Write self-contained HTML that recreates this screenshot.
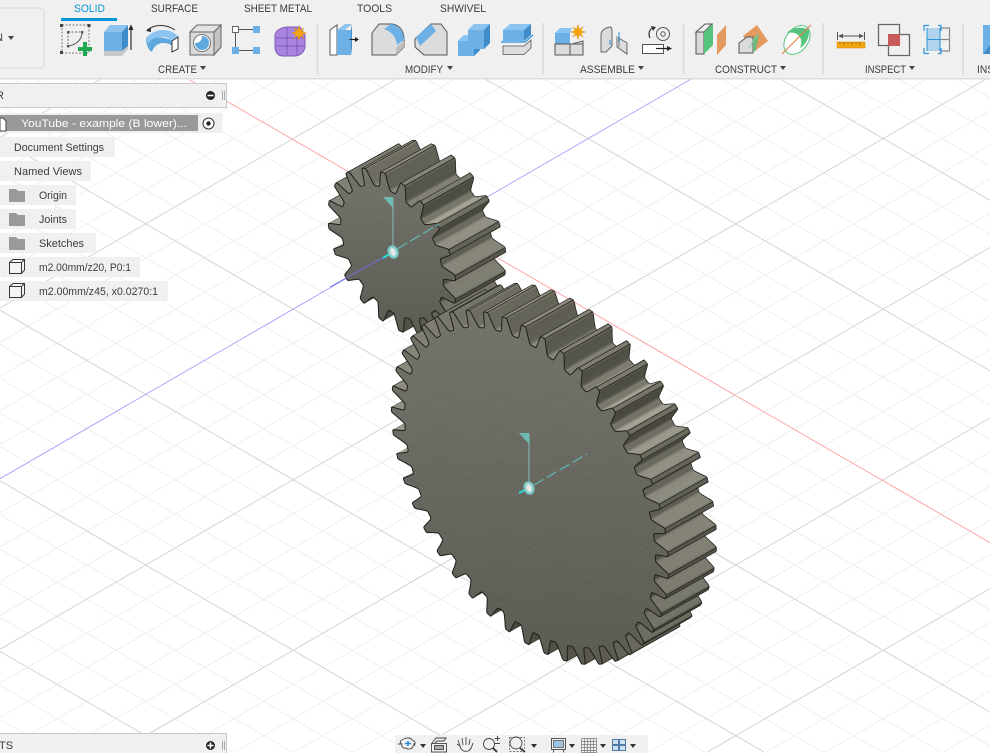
<!DOCTYPE html>
<html><head><meta charset="utf-8"><style>
html,body{margin:0;padding:0;background:#fff;width:990px;height:753px;overflow:hidden}
svg{display:block;overflow:hidden}
text{font-family:"Liberation Sans",sans-serif;font-size:11px;fill:#3c3c3c}
</style></head><body>
<svg id="s" xmlns="http://www.w3.org/2000/svg" width="990" height="753" viewBox="0 0 990 753">
<defs>
<linearGradient id="fg" x1="0" y1="0" x2="0" y2="1"><stop offset="0" stop-color="#74746d"/><stop offset="1" stop-color="#5c5c54"/></linearGradient>
<polygon id="star" fill="#f5a30f" stroke="#d98a00" stroke-width=".3" points="0,-8 1.5,-3 5.6,-5.6 3,-1.5 8,0 3,1.5 5.6,5.6 1.5,3 0,8 -1.5,3 -5.6,5.6 -3,1.5 -8,0 -3,-1.5 -5.6,-5.6 -1.5,-3"/>
</defs>
<rect width="990" height="753" fill="#fff"/>
<g id="grid"></g>
<g id="gears"></g>

<!-- origin markers -->
<g>
<path d="M330 287L384 257" stroke="#6f6fe0" stroke-width="1" fill="none"/>
<path d="M393 198V250" stroke="#86bdb9" stroke-width="1" fill="none"/>
<polygon points="383,197 393,197 393,208" fill="#6fb9b5"/>
<path d="M397 249L439 224" stroke="#5fb5b0" stroke-width="1.3" stroke-dasharray="12 3" fill="none"/>
<path d="M383 258L391 253" stroke="#1fe0da" stroke-width="2" fill="none"/>
<ellipse cx="393" cy="252" rx="5" ry="6.5" transform="rotate(-20 393 252)" fill="#8fd0cc" stroke="#6fb9b5"/>
<ellipse cx="393" cy="252" rx="2.5" ry="4" transform="rotate(-20 393 252)" fill="#e8e8e8"/>
<path d="M529 434V482" stroke="#86bdb9" stroke-width="1" fill="none"/>
<polygon points="519,433 529,433 529,444" fill="#6fb9b5"/>
<path d="M534 485L587 454" stroke="#5fb5b0" stroke-width="1.3" stroke-dasharray="11 4" fill="none"/>
<path d="M519 493L527 489" stroke="#1fe0da" stroke-width="2" fill="none"/>
<ellipse cx="529" cy="488" rx="5" ry="6.5" transform="rotate(-20 529 488)" fill="#8fd0cc" stroke="#6fb9b5"/>
<ellipse cx="529" cy="488" rx="2.5" ry="4" transform="rotate(-20 529 488)" fill="#e8e8e8"/>
</g>

<!-- toolbar -->
<rect x="0" y="0" width="990" height="78" fill="#f0f0f0"/>
<rect x="0" y="78" width="990" height="1.5" fill="#dcdcdc"/>
<path d="M0 8H40A4 4 0 0 1 44 12V64A4 4 0 0 1 40 68H0" fill="#f0f0f0" stroke="#dcdcdc" stroke-width="1.2"/>
<text x="-5" y="41">N</text>
<polygon points="8,36 14,36 11,40" fill="#444"/>

<text x="74" y="12" textLength="31" lengthAdjust="spacingAndGlyphs" style="fill:#0696d7">SOLID</text>
<rect x="61" y="18" width="56" height="3" fill="#0696d7"/>
<text x="151" y="12" textLength="47" lengthAdjust="spacingAndGlyphs">SURFACE</text>
<text x="244" y="12" textLength="68" lengthAdjust="spacingAndGlyphs">SHEET METAL</text>
<text x="357" y="12" textLength="35" lengthAdjust="spacingAndGlyphs">TOOLS</text>
<text x="440" y="12" textLength="46" lengthAdjust="spacingAndGlyphs">SHWIVEL</text>

<text x="158" y="73" textLength="39" lengthAdjust="spacingAndGlyphs">CREATE</text><polygon points="200,66 206,66 203,70" fill="#444"/>
<text x="405" y="73" textLength="38" lengthAdjust="spacingAndGlyphs">MODIFY</text><polygon points="447,66 453,66 450,70" fill="#444"/>
<text x="580" y="73" textLength="55" lengthAdjust="spacingAndGlyphs">ASSEMBLE</text><polygon points="638,66 644,66 641,70" fill="#444"/>
<text x="715" y="73" textLength="62" lengthAdjust="spacingAndGlyphs">CONSTRUCT</text><polygon points="780,66 786,66 783,70" fill="#444"/>
<text x="865" y="73" textLength="41" lengthAdjust="spacingAndGlyphs">INSPECT</text><polygon points="909,66 915,66 912,70" fill="#444"/>
<text x="977" y="73" textLength="17" lengthAdjust="spacingAndGlyphs">INS</text>

<g fill="#dedede"><rect x="316.5" y="23" width="2" height="51"/><rect x="542" y="23" width="2" height="51"/><rect x="682.5" y="23" width="2" height="51"/><rect x="822" y="23" width="2" height="51"/><rect x="962" y="23" width="2" height="51"/></g>

<!-- CREATE icons -->
<g fill="none">
<path d="M62 25H89V53H62Z" stroke="#777" stroke-dasharray="2 1.5"/>
<g fill="#444"><rect x="60" y="24" width="3" height="3"/><rect x="87.5" y="24" width="3" height="3"/><rect x="60" y="51" width="3" height="3"/></g>
<path d="M68 32V46M68 32H82" stroke="#666" stroke-dasharray="2 1.5"/>
<path d="M68 46C76 45 82 40 82 32" stroke="#555"/>
<g fill="#555"><rect x="67" y="31" width="2.4" height="2.4"/><rect x="81" y="31" width="2.4" height="2.4"/><rect x="67" y="45" width="2.4" height="2.4"/></g>
<path d="M85 42V56M78 49H92" stroke="#1fa84f" stroke-width="4"/>
<polygon points="104,32 122,32 122,51 104,51" fill="#6db0e6"/>
<polygon points="104,32 110,25 128,25 122,32" fill="#8cc4ef"/>
<polygon points="122,32 128,25 128,46 122,51" fill="#3f8cc8"/>
<polygon points="104,51 122,51 128,46 128,49 122,56 104,56" fill="#c8c8c8"/>
<path d="M131 50V27" stroke="#333" stroke-width="1.2"/><polygon points="128.5,30 131,24.5 133.5,30" fill="#222"/>
<path d="M147 30C155 24 166 24 175 30" stroke="#333"/><polygon points="146,31 151,27 151,32" fill="#333"/>
<path d="M146 38C146 44 148 50 152 52C153 47 158 43 163 43C167 43 170 44 172 46V41C168 37 150 36 146 38Z" fill="#5ea8de"/>
<path d="M146 38C150 33 157 30 163 30C169 30 174 32 178 36L172 41C168 37 165 37 161 37C155 37 151 39 148 44Z" fill="#8cc4ef"/>
<polygon points="172,41 178,37 178,49 172,52" fill="#fff" stroke="#333"/>
<polygon points="190,32 197,25 221,25 214,32" fill="#e4e4e4" stroke="#666"/>
<polygon points="214,32 221,25 221,47 214,55" fill="#c4c4c4" stroke="#666"/>
<rect x="190" y="32" width="24" height="23" fill="#d8d8d8" stroke="#666"/>
<circle cx="202" cy="43" r="8.5" fill="#fff" stroke="#777"/>
<path d="M202 36A7 7 0 1 1 195 43C200 43 202 40 202 36Z" fill="#5ea8de"/>
<rect x="232.5" y="26.5" width="6" height="6" fill="#fff" stroke="#666"/>
<rect x="253" y="26" width="7" height="7" fill="#6db0e6"/>
<rect x="232" y="47" width="7" height="7" fill="#6db0e6"/>
<rect x="253" y="47" width="7" height="7" fill="#6db0e6"/>
<path d="M239 29.5H253M235.500 33V47M239 50.500H253" stroke="#555"/>
<path d="M275 36C275 30 282 27 289 27H300L305 35V46C305 52 300 56 294 56H283C278 56 275 52 275 47Z" fill="#a884e0" stroke="#7c5aba"/>
<path d="M276 38H304M276 46H304M287 28V55M297 28V55" stroke="#7c5aba" stroke-width=".9"/>
<use href="#star" transform="translate(299,33) scale(.95)"/>
</g>

<!-- MODIFY icons -->
<g fill="none">
<polygon points="330,30 337,25 337,55 330,55" fill="#fff" stroke="#555"/>
<polygon points="337,30 345,24 352,24 345,30" fill="#8cc4ef"/>
<rect x="337" y="30" width="14" height="25" fill="#6db0e6"/>
<polygon points="351,30 352,24 352,48 351,55" fill="#3f8cc8"/>
<path d="M349.500 39.500H358" stroke="#222" stroke-width="1.2"/><polygon points="355,37 359,39.500 355,42" fill="#222"/>
<path d="M372 55V33L379 24H392C400 25 404 31 404 40V47L396 55Z" fill="#dcdcdc" stroke="#555"/>
<path d="M384 29L391 24C398 25 404 32 404 40L397 45C396 37 392 32 384 29Z" fill="#6db0e6"/>
<polygon points="396,55 396,48 404,41 404,47" fill="#bcbcbc"/>
<polygon points="415,39 431,24 441,24 447,32 447,55 424,55 415,47" fill="#dcdcdc" stroke="#555"/>
<polygon points="416,37 431,24 436,31 420,46" fill="#6db0e6"/>
<path d="M458 41L464 35H468V30L474 24H490V43L484 49H480V50L474 56H458Z" fill="#6db0e6"/>
<polygon points="468,30 474,24 490,24 484,30" fill="#8cc4ef"/>
<polygon points="484,30 490,24 490,43 484,49" fill="#3f8cc8"/>
<polygon points="458,41 464,35 468,35 468,41" fill="#8cc4ef"/>
<polygon points="474,49 480,49 480,50 474,56" fill="#3f8cc8"/>
<polygon points="503,30 510,24 531,24 524,30" fill="#8cc4ef"/>
<rect x="503" y="30" width="21" height="11" fill="#6db0e6"/>
<polygon points="524,30 531,24 531,35 524,41" fill="#3f8cc8"/>
<path d="M501 42H525L533 35" stroke="#1f8fd8" stroke-width="1.3"/>
<polygon points="503,46 524,46 531,40 531,48 524,54.500 503,54.500" fill="#dcdcdc" stroke="#555" stroke-width=".8"/>
</g>

<!-- ASSEMBLE icons -->
<g fill="none">
<rect x="555" y="33" width="15" height="11" fill="#6db0e6"/>
<polygon points="555,33 560,28 572,28 570,33" fill="#8cc4ef"/>
<polygon points="555,44 570,44 570,55 555,55" fill="#dcdcdc" stroke="#555"/>
<polygon points="570,44 583,44 583,55 570,55" fill="#dcdcdc" stroke="#555"/>
<path d="M572 44L583 41V44" stroke="#555"/>
<use href="#star" transform="translate(578,32) scale(.95)"/>
<path d="M601 52V35C601 30 605 28 610 27C612 27 612 30 612 33V46L606 52Z" fill="#dcdcdc" stroke="#666"/>
<path d="M617 37L627 43V54L617 47Z" fill="#dcdcdc" stroke="#666"/>
<rect x="616" y="37" width="4" height="10" fill="#aaa"/>
<path d="M619 32V42M610 40V45" stroke="#1f8fd8"/>
<circle cx="663" cy="34" r="6.500" stroke="#555"/><circle cx="663" cy="34" r="2.200" stroke="#555"/>
<path d="M654 27C649 29 648 34 650 38" stroke="#333" stroke-width="1.200"/><polygon points="651,26 656,27 653,31" fill="#333"/>
<rect x="642.500" y="44.500" width="21" height="9" fill="#fff" stroke="#555"/>
<path d="M656 48.500H670" stroke="#222" stroke-width="1.200"/><polygon points="667,46 672,48.500 667,51" fill="#222"/>
</g>

<!-- CONSTRUCT icons -->
<g fill="none">
<polygon points="696,32 705,24 712,24 704,32" fill="#eee" stroke="#555"/>
<rect x="696" y="32" width="8" height="22" fill="#d8d8d8" stroke="#555"/>
<polygon points="704,32 713,24 713,45 704,54" fill="#56c47e"/>
<polygon points="717,35 726,25 726,45 717,55" fill="#e4995f"/>
<polygon points="743,36 757,25 768,41 755,51" fill="#e4995f"/>
<polygon points="739,43 747,37 753,37 753,53 739,53" fill="#dcdcdc" stroke="#555"/>
<polygon points="753,38 759,34 756,50 753,53" fill="#6fb87a"/>
<path d="M749 48L758 34" stroke="#1fa84f"/>
<path d="M749 48L758 34" stroke="#fff" stroke-width=".5"/>
<ellipse cx="797" cy="40" rx="11" ry="16" transform="rotate(38 797 40)" fill="#fff" stroke="#56c47e"/>
<path d="M787 33C792 26 805 27 809 30C810 36 806 45 800 48C804 38 798 31 787 33Z" fill="#56c47e"/>
<path d="M782 54L811 25" stroke="#e07a3a" stroke-width="1"/>
</g>

<!-- INSPECT icons -->
<g fill="none">
<rect x="837" y="42" width="28" height="6" fill="#f5a60f" stroke="#c88a00" stroke-width=".5"/>
<path d="M840 42v2M844 42v3M848 42v2M852 42v3M856 42v2M860 42v3" stroke="#7a5800" stroke-width=".7"/>
<path d="M837.500 32V40M864.500 32V40M839 36H863" stroke="#555"/>
<polygon points="838,36 843,33.800 843,38.200" fill="#555"/><polygon points="864,36 859,33.800 859,38.200" fill="#555"/>
<path d="M899.500 34.500V24.500H878.500V45.500H888.500" stroke="#666" stroke-width="1.300"/>
<path d="M888.500 45.500V55.500H909.500V34.500H899.500" stroke="#666" stroke-width="1.300"/>
<rect x="888" y="34" width="12" height="12" fill="#c95a5a"/>
<rect x="927" y="28" width="13" height="11" fill="#b0d3ee"/><rect x="927" y="40" width="13" height="11" fill="#b0d3ee"/>
<path d="M940 28H949.500V51H940M940 39.500H949.500" stroke="#888" stroke-width="1.200"/>
<path d="M927 28V51M927 39.500H940M940 28V51" stroke="#2a95dc" stroke-width="1"/>
<path d="M929 25.500H924V31M929 53.500H924V48M938 25.500H941V31M938 53.500H941V48" stroke="#2a95dc" stroke-width="1.200"/>
<polygon points="983,25 990,25 990,54 983,54" fill="#3f8cc8"/>
<polygon points="983,25 990,25 990,45 983,54" fill="#6db0e6"/>
</g>

<!-- browser -->
<path d="M0 83.500H226.500V107.500H0Z" fill="#f0f0f0"/>
<path d="M0 83.500H226.500V107.500H0" fill="none" stroke="#c8c8c8"/>
<text x="-4" y="99">R</text>
<circle cx="210.500" cy="95.500" r="4.500" fill="#222"/><rect x="207.500" y="94.700" width="6" height="1.600" fill="#fff"/>
<path d="M222.500 91V100M224.500 91V100" stroke="#999" stroke-width=".8"/>

<rect x="0" y="113" width="222.500" height="20" fill="#efefef"/>
<rect x="0" y="115" width="198" height="16" fill="#999"/>
<path d="M0 118H3L6 121V131H0Z" fill="#fff" stroke="#444"/>
<text x="21" y="127" textLength="166" lengthAdjust="spacingAndGlyphs" style="fill:#fff">YouTube - example (B lower)...</text>
<circle cx="208.500" cy="123.500" r="5.500" fill="#fff" stroke="#333"/><circle cx="208.500" cy="123.500" r="2.200" fill="#222"/>

<g fill="#f0f0f0">
<rect x="0" y="137" width="115" height="20"/><rect x="0" y="161" width="91" height="20"/><rect x="0" y="185" width="76" height="20"/><rect x="0" y="209" width="76" height="20"/><rect x="0" y="233" width="96" height="20"/><rect x="0" y="257" width="140" height="20"/><rect x="0" y="281" width="168" height="20"/>
</g>
<text x="14" y="151" textLength="90" lengthAdjust="spacingAndGlyphs">Document Settings</text>
<text x="14" y="175" textLength="68" lengthAdjust="spacingAndGlyphs">Named Views</text>
<text x="39" y="199" textLength="28" lengthAdjust="spacingAndGlyphs">Origin</text>
<text x="39" y="223" textLength="28" lengthAdjust="spacingAndGlyphs">Joints</text>
<text x="39" y="247" textLength="45" lengthAdjust="spacingAndGlyphs">Sketches</text>
<text x="39" y="271" textLength="92" lengthAdjust="spacingAndGlyphs">m2.00mm/z20, P0:1</text>
<text x="39" y="295" textLength="119" lengthAdjust="spacingAndGlyphs">m2.00mm/z45, x0.0270:1</text>
<g fill="#9a9a9a">
<path d="M9 189H16L18 191H25V202H9Z"/><path d="M9 213H16L18 215H25V226H9Z"/><path d="M9 237H16L18 239H25V250H9Z"/>
</g>
<g fill="#f4f4f4" stroke="#333" stroke-width="1">
<path d="M9.500 262.500L13 259.500H24.500V270L21.500 273.500H9.500Z"/><path d="M9.500 262.500H21.500V273.500M21.500 262.500L24.500 259.500" fill="none"/>
<path d="M9.500 286.500L13 283.500H24.500V294L21.500 297.500H9.500Z"/><path d="M9.500 286.500H21.500V297.500M21.500 286.500L24.500 283.500" fill="none"/>
</g>

<!-- comments -->
<path d="M0 733.500H226.500V753H0Z" fill="#f0f0f0"/>
<path d="M0 733.500H226.500V753" fill="none" stroke="#c8c8c8"/>
<text x="-1" y="749">TS</text>
<circle cx="210.500" cy="745.500" r="4.500" fill="#222"/><path d="M207.500 745.500H213.500M210.500 742.500V748.500" stroke="#fff" stroke-width="1.500"/>
<path d="M222.500 741V750M224.500 741V750" stroke="#999" stroke-width=".8"/>

<!-- nav bar -->
<rect x="395" y="735" width="253" height="18" fill="#f0f0f0"/>
<g fill="none" stroke="#444" stroke-width=".9">
<path d="M404 739C407 737 411 738 412 740C416 741 416 745 413 746C413 749 408 750 406 748C403 749 401 746 402 744C399 743 400 740 404 739Z"/>
<path d="M405 743.500H411M408 741V746" stroke="#1f8fd8" stroke-width="1.500"/>
<path d="M398 744H401M413 744H415"/>
<rect x="431.500" y="743.500" width="15" height="8.500"/><rect x="434.500" y="745.500" width="9" height="4" fill="#aaa"/>
<path d="M432 743L436 738H446L444 741H437L435 743"/>
<path d="M460 746L458 740M463 745L462 738M466 745L466 737M469 745L470 739M460 746C461 751 465 752 468 751C471 750 472 746 473 743M460 746L457 744"/>
<circle cx="489" cy="744" r="5.500"/><path d="M493 748L497 752" stroke-width="2"/>
<path d="M495 738.500H500M497.500 736V741M495 743.500H500"/>
<rect x="509.500" y="737.500" width="15" height="14" stroke-dasharray="2 1.500" stroke="#777"/>
<circle cx="516" cy="743" r="6"/><path d="M520 748L525 752" stroke-width="2"/>
<rect x="551.500" y="738.500" width="14" height="11" /><rect x="553.500" y="740.500" width="10" height="7" fill="#9fc3e4" stroke="#666"/>
<path d="M554 750L553 752.500M563 750L564 752.500"/>
<path d="M581.500 738.500H596.500V752.500H581.500ZM584.500 738.500V752.500M587.500 738.500V752.500M590.500 738.500V752.500M593.500 738.500V752.500M581.500 741.500H596.500M581.500 744.500H596.500M581.500 747.500H596.500M581.500 750.500H596.500" stroke="#777" stroke-width=".7"/>
<rect x="612.500" y="739.500" width="6" height="5" fill="#cfe0f0" stroke="#3d6fa0"/><rect x="619.500" y="739.500" width="6" height="5" fill="#cfe0f0" stroke="#3d6fa0"/><rect x="612.500" y="745.500" width="6" height="5" fill="#cfe0f0" stroke="#3d6fa0"/><rect x="619.500" y="745.500" width="6" height="5" fill="#cfe0f0" stroke="#3d6fa0"/>
</g>
<g fill="#333"><polygon points="420,744 426,744 423,748"/><polygon points="531,744 537,744 534,748"/><polygon points="569,744 575,744 572,748"/><polygon points="600,744 606,744 603,748"/><polygon points="630,744 636,744 633,748"/></g>
</svg>
<script>
(function(){
var NS="http://www.w3.org/2000/svg",g=document.getElementById("grid"),G=document.getElementById("gears");
var S=0.5783;
function el(p,t,a){var e=document.createElementNS(NS,t);for(var k in a)e.setAttribute(k,a[k]);p.appendChild(e);return e;}
function seg(p,c,s,col,op,w){
 var a=(79-c)/s,b=(752-c)/s,lo=Math.max(0,Math.min(a,b)),hi=Math.min(990,Math.max(a,b));
 if(hi<=lo)return;
 el(p,"line",{x1:lo.toFixed(1),y1:(c+s*lo).toFixed(1),x2:hi.toFixed(1),y2:(c+s*hi).toFixed(1),stroke:col,"stroke-width":w,"stroke-opacity":op});
}
function lines(p,maj,mins,op,skip){
 for(var pass=0;pass<2;pass++){
 for(var k=-60;k<=60;k++){
  var isMaj=((k%5)+5)%5==0; if((pass==1)!=isMaj)continue;
  if(skip&&k==0)continue;
  var c1=-31+34.12*k,c2=478.7+34.12*k;
  var col=isMaj?maj:mins;
  seg(p,c1,S,col,op,.9);
  seg(p,c2,-S,col,op,.9);
 }}
}
lines(g,"#d0d0d0","#eeeeee",1,true);
el(g,"line",{x1:190,y1:80,x2:990,y2:542.6,stroke:"#ff9c9c","stroke-width":.9});
el(g,"line",{x1:0,y1:478.7,x2:692,y2:78.5,stroke:"#a3a3ff","stroke-width":.9});

var defs=document.querySelector("defs"),cid=0;
function gear(cx,cy,R1,R2,z,rootF,dx,dy,ph){
 var prof=[[0,0],[.08,0],[.14,.08],[.23,.45],[.32,.92],[.36,1],[.54,1],[.58,.92],[.67,.45],[.76,.08],[.82,0],[.90,0]];
 var pts=[],p=2*Math.PI/z;
 for(var i=0;i<z;i++){
  for(var j=0;j<prof.length;j++){
   var th=(i+prof[j][0])*p+ph,r=rootF+(1-rootF)*prof[j][1];
   pts.push({x:r*Math.sin(th),y:r*Math.cos(th),e:(j==5||j==6)?1:0});
  }
 }
 function sc(P,d){return [(cx+P.x*R2*.866+d*dx).toFixed(1), (cy+P.x*R2*.5-P.y*R1+d*dy).toFixed(1)];}
 var quads=[];
 for(i=0;i<pts.length;i++){
  var a=pts[i],b=pts[(i+1)%pts.length];
  var tx=b.x-a.x,ty=b.y-a.y,l=Math.hypot(tx,ty)||1,nx=-ty/l,ny=tx/l;
  if(nx+ny<=0.0)continue;
  quads.push({a:a,b:b,nx:nx,ny:ny,k:(a.x+b.x+a.y+b.y)});
 }
 quads.sort(function(u,v){return u.k-v.k;});
 var o="";
 quads.forEach(function(q){
  var A=sc(q.a,0),B=sc(q.b,0),C=sc(q.b,1),D=sc(q.a,1);
  var t=Math.pow(Math.max(0,Math.min(1,.5+.5*(q.ny*.85-q.nx*.3))),1.3);
  var sp=Math.pow(Math.max(0,q.ny*.55-q.nx*.83),6)*.5; t=Math.min(1,t*.8+sp);
  var R=Math.round(64+t*100),Gg=Math.round(63+t*99),Bb=Math.round(54+t*95);
  var f="rgb("+R+","+Gg+","+Bb+")";
  o+='<path d="M'+A+'L'+B+'L'+C+'L'+D+'Z" fill="'+f+'" stroke="'+f+'" stroke-width=".4"/>';
  o+='<path d="M'+D+'L'+C+'" stroke="#24241f" stroke-width=".8" fill="none"/>';
  if(q.a.e==1) o+='<path d="M'+A+'L'+D+'" stroke="#24241f" stroke-width=".7" fill="none"/>';
  if(q.b.e==1) o+='<path d="M'+B+'L'+C+'" stroke="#24241f" stroke-width=".7" fill="none"/>';
 });
 var face="M";
 pts.forEach(function(P,i){face+=(i?"L":"")+sc(P,0).join(",");});
 face+="Z";
 var w=document.createElementNS(NS,"g");
 w.innerHTML=o;
 G.appendChild(w);
 el(G,"path",{d:face,fill:"url(#fg)",stroke:"#1f1f1b","stroke-width":1,"stroke-linejoin":"round"});
 var id="c"+(cid++);
 var cp=el(defs,"clipPath",{id:id}); el(cp,"path",{d:face});
 var over=el(G,"g",{"clip-path":"url(#"+id+")"});
 lines(over,"#000","#000",.035,false);
}
gear(392,252,75,74,20,.80,50,-28,.03);
gear(530,487.5,158,160,45,.905,48,-27,.03);
})();
</script>
</body></html>
